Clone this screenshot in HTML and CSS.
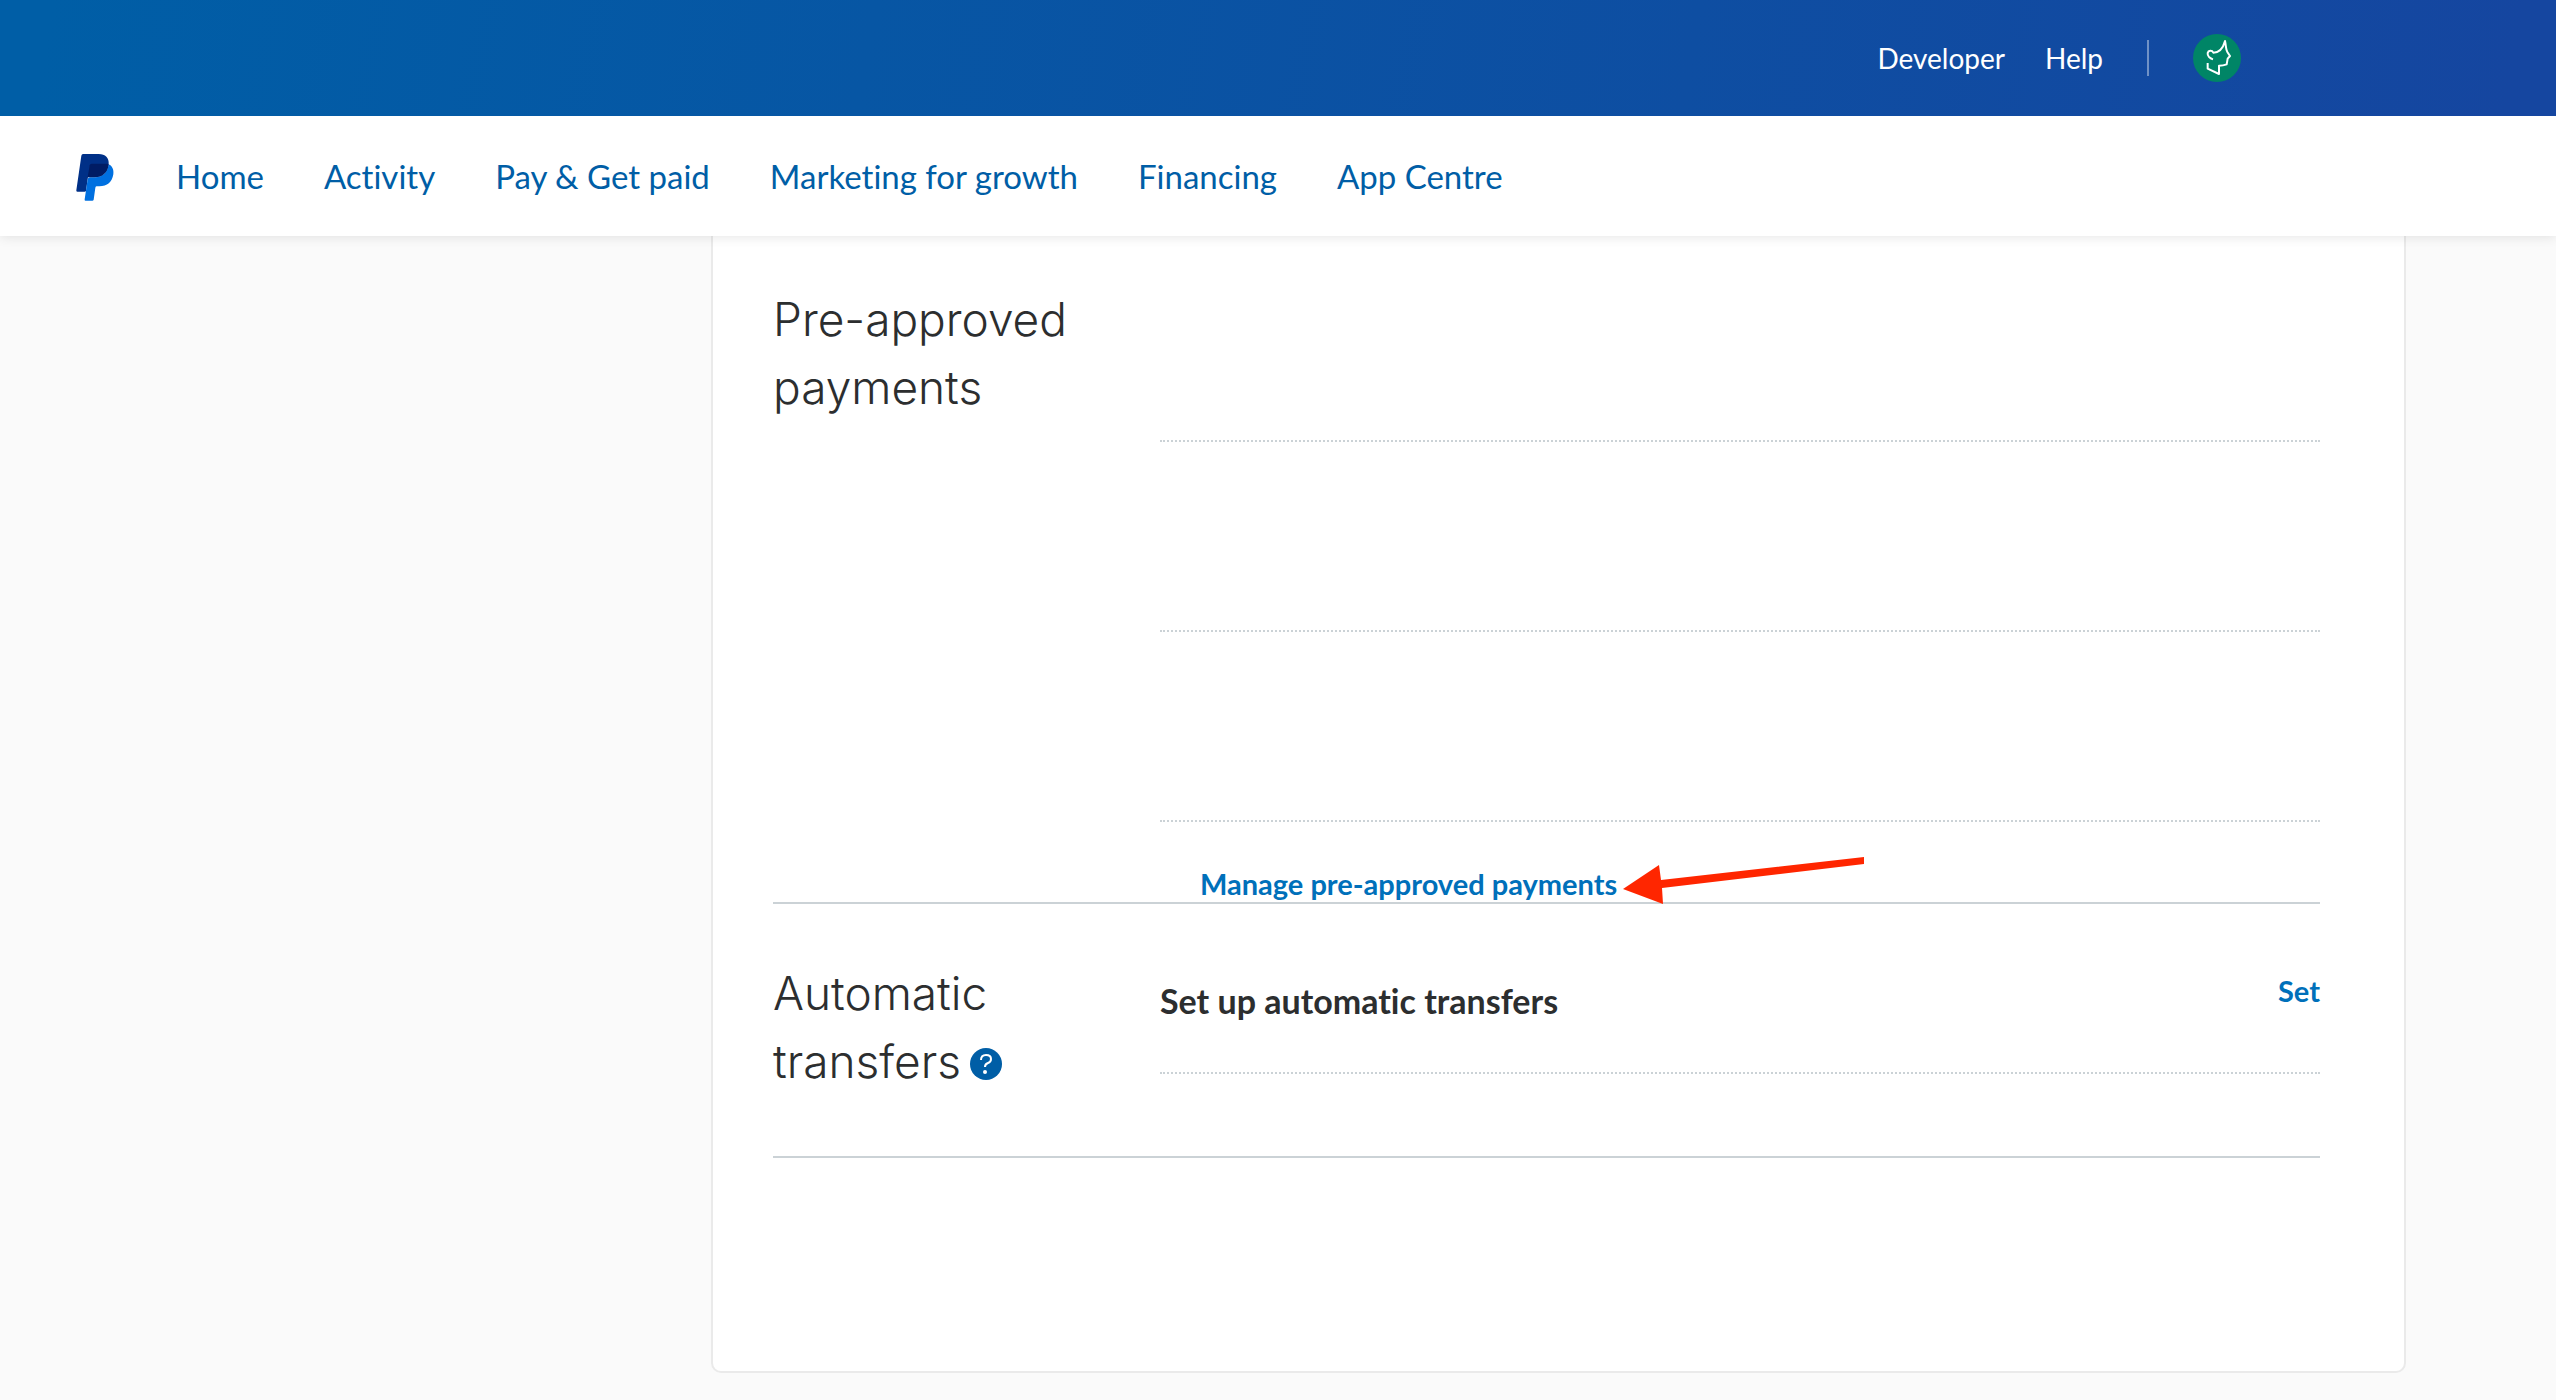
FILE: index.html
```html
<!DOCTYPE html>
<html lang="en">
<head>
<meta charset="utf-8">
<title>Payment preferences</title>
<link rel="stylesheet" href="styles.css">
</head>
<body>
<header class="header">
  <div class="topbar">
    <a class="topbar-link" href="#">Developer</a>
    <a class="topbar-link" href="#">Help</a>
    <span class="topbar-divider"></span>
    <a class="avatar" href="#" aria-label="Profile">
      <svg viewBox="39 45 144 144" aria-hidden="true">
        <circle cx="111" cy="117" r="72" fill="#008566"/>
        <path d="M99 121C89 118 82 110 83 102C85 94 96 93 100 101C118 101 129 88 135 66C138 78 137 92 142 99L150 111L143 119L140 136Q129 140 117 140V165L83 149V132" fill="none" stroke="#fff" stroke-width="6" stroke-linejoin="round"/>
      </svg>
    </a>
  </div>
  <nav class="nav">
    <a class="logo" href="#" aria-label="PayPal">
      <svg viewBox="46 43 114 141" aria-hidden="true">
        <path fill="#003087" d="M67 43H114C134 43 146 55 144 74C141 100 124 112 102 112H82L76 153Q75 156 72 156H50Q46 156 47 152L62 48Q63 43 67 43Z"/>
        <path fill="#0070e0" d="M144 74C155 79 160 90 158 104C154 128 140 140 116 140H108Q105 140 104 144L99 180Q98 183 95 183H74Q71 183 72 179L81 119Q82 113 88 113H104C126 112 141 98 144 74Z"/>
        <path fill="#001c64" d="M144 74C141 100 124 113 102 113H81L87 77Q88 72 93 72H141Q143 72 144 74Z"/>
      </svg>
    </a>
    <a class="nav-link" href="#">Home</a>
    <a class="nav-link" href="#">Activity</a>
    <a class="nav-link" href="#">Pay &amp; Get paid</a>
    <a class="nav-link" href="#">Marketing for growth</a>
    <a class="nav-link" href="#">Financing</a>
    <a class="nav-link" href="#">App Centre</a>
  </nav>
</header>
<main class="card">
  <section class="section">
    <h2 class="section-title">Pre-approved payments</h2>
    <div class="section-body">
      <div class="row row-first"></div>
      <div class="row"></div>
      <div class="row"></div>
      <div class="manage">
        <a class="action" href="#">Manage pre-approved payments</a>
        <svg class="arrow" viewBox="0 0 242 48" aria-hidden="true">
          <path fill="#ff2600" d="M0 33L36 9L38 24L241 1V8L39 32L40 48Z"/>
        </svg>
      </div>
    </div>
  </section>
  <section class="section section-transfers">
    <h2 class="section-title">Automatic transfers <button class="help" type="button" aria-label="About automatic transfers"><svg viewBox="0 0 32 32" aria-hidden="true"><circle cx="16" cy="16" r="16" fill="#005ea6"/><path d="M11 12Q11 7 16 7Q21 7 21 11Q21 14 18 15Q15 16 15 19" fill="none" stroke="#fff" stroke-width="2"/><circle cx="15" cy="24" r="2" fill="#fff"/></svg></button></h2>
    <div class="section-body">
      <div class="row row-transfers">
        <h3 class="row-title">Set up automatic transfers</h3>
        <a class="action" href="#">Set</a>
      </div>
    </div>
  </section>
</main>
</body>
</html>
```
FILE: styles.css
```css
* {
  box-sizing: border-box;
}

body {
  margin: 0;
  background: #fafafa;
  color: #2c2e2f;
  font-family: Lato, "Open Sans", sans-serif;
  font-variant-ligatures: none;
}

a {
  text-decoration: none;
}

svg {
  display: block;
}

.header {
  position: relative;
  z-index: 1;
  box-shadow: 0 0 12px rgba(0, 0, 0, 0.12);
}

.topbar {
  display: flex;
  align-items: center;
  justify-content: flex-end;
  gap: 40px;
  height: 116px;
  padding-right: 315px;
  background: linear-gradient(100deg, #005ea6 2%, #1546a0 98%);
}

.topbar-link {
  color: #fff;
  font-size: 28px;
  line-height: 40px;
}

.topbar-divider {
  width: 2px;
  height: 36px;
  margin-left: 4px;
  background: rgba(255, 255, 255, 0.4);
}

.avatar {
  width: 48px;
  margin-left: 4px;
}

.nav {
  display: flex;
  align-items: center;
  gap: 60px;
  height: 120px;
  padding-left: 76px;
  background: #fff;
}

.logo {
  width: 38px;
  margin-right: 2px;
  padding-top: 3px;
}

.nav-link {
  color: #005ea6;
  font-size: 33px;
  line-height: 40px;
}

.card {
  margin: 0 150px 27px 711px;
  padding: 0 84px 213px 60px;
  border: 2px solid #eaeaea;
  border-top: 0;
  border-radius: 0 0 10px 10px;
  background: #fff;
}

.section {
  display: grid;
  grid-template-columns: 387px 1fr;
  border-bottom: 2px solid #cbd2d6;
}

.section-title {
  margin: 0;
  padding: 49px 40px 0 0;
  font: 300 46px/68px Inter, "Liberation Sans", sans-serif;
}

.section-transfers .section-title {
  padding-top: 55px;
}

.row {
  height: 190px;
  border-bottom: 2px dotted #cbd2d6;
}

.row-first {
  height: 206px;
}

.row-transfers {
  display: flex;
  align-items: flex-start;
  justify-content: space-between;
  height: 170px;
  margin-bottom: 82px;
  padding-top: 67px;
}

.row-title {
  margin: 10px 0 0;
  font-size: 34px;
  font-weight: 700;
  line-height: 40px;
}

.manage {
  display: flex;
  align-items: flex-start;
  height: 80px;
  padding: 42px 0 0 40px;
}

.action {
  color: #0070ba;
  font-size: 29px;
  font-weight: 700;
  line-height: 40px;
}

.arrow {
  width: 242px;
  height: 48px;
  margin: -8px 0 0 6px;
}

.help {
  display: inline-block;
  width: 32px;
  height: 32px;
  margin-left: -4px;
  padding: 0;
  border: 0;
  background: none;
  vertical-align: -2px;
}
```
